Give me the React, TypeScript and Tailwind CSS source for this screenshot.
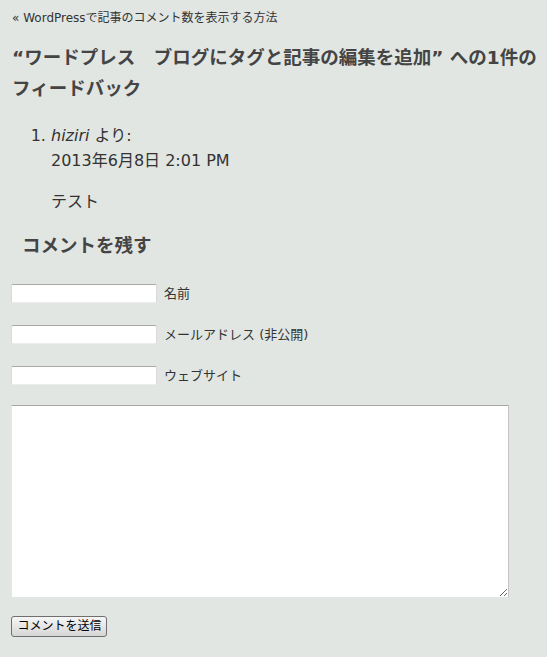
import React from "react";

const font = { fontFamily: '"DejaVu Sans", "Noto Sans CJK JP", sans-serif' };

const fields = [
  { id: "author", label: "名前" },
  { id: "email", label: "メールアドレス (非公開)" },
  { id: "url", label: "ウェブサイト" },
];

const App: React.FC = () => {
  return (
    <div
      className="min-h-[657px] bg-[#e1e6e2] px-[11px] pt-[10px] pb-[20px] text-[#333]"
      style={font}
    >
      <div className="pl-[1px] text-[12px] leading-[16px]">
        <a href="#" className="text-[#333]">
          « WordPressで記事のコメント数を表示する方法
        </a>
      </div>

      <h3 className="mt-[16px] pl-[1px] text-[18.5px] font-bold leading-[31px] text-[#444]">
        <span className="whitespace-nowrap">
          “ワードプレス　ブログにタグと記事の編集を追加” への1件の
        </span>
        <br />
        フィードバック
      </h3>

      <ol className="mt-[19px] list-decimal pl-[40px] text-[16px] leading-[25px]">
        <li>
          <div>
            <cite className="italic">hiziri</cite> より:
          </div>
          <div>2013年6月8日 2:01 PM</div>
          <p className="mt-[16px]">テスト</p>
        </li>
      </ol>

      <h3 className="mt-[16px] pl-[11px] text-[18.5px] font-bold leading-[31px] text-[#444]">
        コメントを残す
      </h3>

      <form className="mt-[23px] flex flex-col gap-[22px]">
        {fields.map((f) => (
          <div key={f.id} className="flex items-center gap-[7px]">
            <input
              id={f.id}
              type="text"
              className="h-[19px] w-[146px] rounded-[2px] border border-[#dadada] border-t-[#a8a8a8] border-b-[#ececec] bg-white px-1 text-[13px] outline-none"
            />
            <label htmlFor={f.id} className="text-[13px] leading-[18px]">
              {f.label}
            </label>
          </div>
        ))}
        <textarea
          className="-mt-[2px] block h-[193px] w-[498px] border border-[#e6e6e6] border-t-[#a8a8a8] border-r-[#c4c4c4] bg-white outline-none"
        />
        <div className="-mt-[7px]">
          <button
            type="button"
            className="h-[21px] w-[96px] rounded-[3px] border border-[#6f6f6f] bg-gradient-to-b from-[#f6f6f6] to-[#d6d6d6] pl-[1px] text-[12px] leading-[17px] text-black"
          >
            コメントを送信
          </button>
        </div>
      </form>
    </div>
  );
};

export default App;
